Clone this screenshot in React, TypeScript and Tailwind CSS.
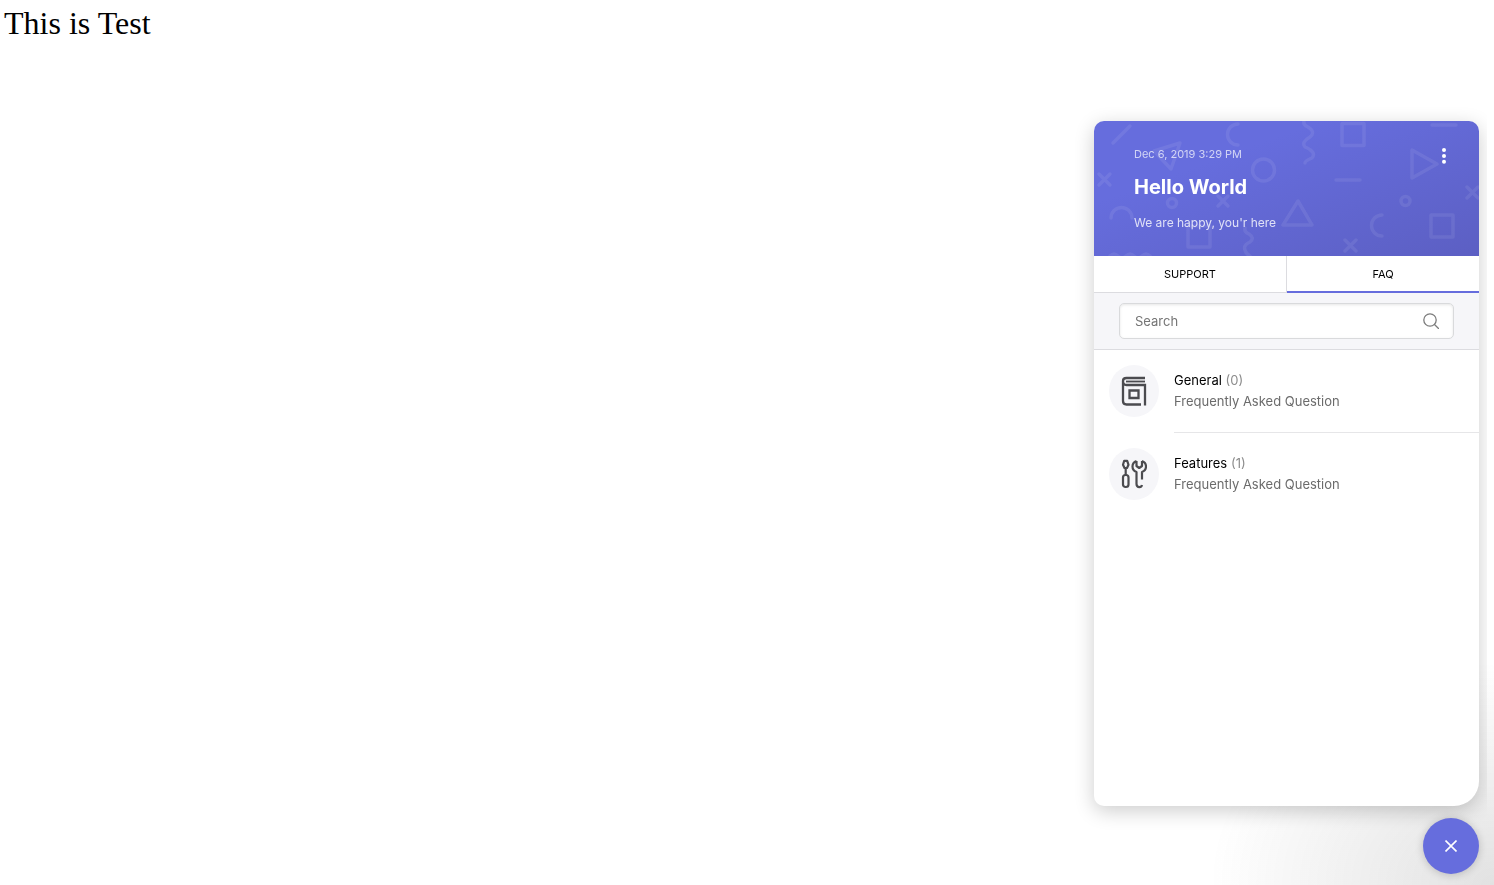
import { ReactNode, useState } from "react";

const tabs = ["SUPPORT", "FAQ"];

const topics = [
  { title: "General", count: 0, icon: <BookIcon /> },
  { title: "Features", count: 1, icon: <ToolsIcon /> },
];

function BookIcon() {
  return (
    <svg
      className="h-[30px] w-[26px]"
      viewBox="0 0 26 30"
      fill="none"
      stroke="#4b4b4f"
      strokeWidth="2.300"
    >
      <path d="M24 2H5.500Q2 2 2 5v20q0 3.500 3.500 3.500H20M2 5q0 4 3.500 4H24v20.500" />
      <path d="M5 5.500h19" strokeWidth="1.800" />
      <path d="M8.500 14.500h9v7.500h-9z" />
    </svg>
  );
}

function ToolsIcon() {
  return (
    <svg
      className="h-[30px] w-[26px]"
      viewBox="0 0 26 30"
      fill="none"
      stroke="#4b4b4f"
      strokeWidth="2.200"
      strokeLinejoin="round"
    >
      <path d="M3.200 1.800h3l1.300 4L6 9H3.500L2 5.800zM4.700 9v7" />
      <rect x="2" y="16" width="5.500" height="12" rx="2.500" />
      <path d="M15.500 2q-4 1.500-4 5.500t4 5.500v12q0 3 3 3.200 2 0 2.500-2.200M21 2q4 1.500 4 5.500t-4 5.500v7.500M15.500 2v5l2.700 2L21 7V2" />
    </svg>
  );
}

function Pattern() {
  return (
    <svg
      className="absolute top-0 right-0 h-[135px] w-[385px]"
      viewBox="0 0 385 135"
      fill="none"
      stroke="#fff"
      strokeOpacity="0.08"
      strokeWidth="3.500"
      strokeLinecap="round"
      strokeLinejoin="round"
    >
      <path d="M19 22 36 5M60 30l26-8-9 26zM5 53l11 11M16 53 5 64M17 97a10.500 10.500 0 0 1 21 0" />
      <circle cx="78" cy="82" r="4.500" />
      <circle cx="169.500" cy="49" r="11" />
      <path d="M144 3a10.500 10.500 0 0 0 0 21M124 75l10 10M134 75l-10 10M94 105h22v21H94z" />
      <path d="M151 107q-1 4 4 6 6 4 1 8-7 3-5 8 1 4 5 6M16 135q4-4 8 0t8 0q4-4 8 0t8 0q4-4 8 0" />
      <path d="M210 0q-1 4 4 6 8 5 2 10-9 5-5 10 12 5 7 11-7 3-7 5" />
      <path d="M248 2.500h22v22h-22zM338 4h24M242 59h24M318 29v28l25-14zM204 80l-15 24h29z" />
      <path d="M373 66l11 11M384 66l-11 11M251 119l11 11M262 119l-11 11M288 94a10.500 10.500 0 0 0 0 21M337 94h22v22h-22z" />
      <circle cx="311.500" cy="80" r="4.500" />
    </svg>
  );
}

function Header() {
  return (
    <header className="relative overflow-hidden bg-linear-[160deg,#666ddd_30%,#5c5fc3] px-10 pt-6 pb-6 text-white">
      <Pattern />
      <div className="relative">
        <p className="text-[11px] leading-[18px] text-white/70">
          Dec 6, 2019 3:29 PM
        </p>
        <h2 className="mt-2 text-[20px] leading-8 font-bold">Hello World</h2>
        <p className="mt-[10px] text-[12px] leading-[19px] text-white/80">
          We are happy, you'r here
        </p>
      </div>
      <button
        aria-label="Menu"
        className="absolute top-6 right-6 flex h-[22px] w-[22px] items-center justify-center"
      >
        <svg className="h-4 w-1" viewBox="0 0 4 16" fill="#fff">
          <circle cx="2" cy="2" r="2" />
          <circle cx="2" cy="8" r="2" />
          <circle cx="2" cy="13.800" r="2" />
        </svg>
      </button>
    </header>
  );
}

function SearchBar() {
  return (
    <div className="border-b border-[#dcdce0] bg-[#f6f6f9] px-[25px] py-[10px]">
      <label className="flex h-9 items-center rounded-[5px] border border-[#d9dadc] bg-white pr-[14px] pl-[15px] shadow-[inset_0_1px_3px_rgba(0,0,0,0.1)]">
        <input
          aria-label="Search"
          placeholder="Search"
          className="min-w-0 flex-1 pt-px text-[13px] outline-none placeholder:text-[#757575]"
        />
        <svg
          className="h-4 w-4"
          viewBox="0 0 16 16"
          fill="none"
          stroke="#7c7c7c"
          strokeWidth="1.300"
          strokeLinecap="round"
        >
          <circle cx="7" cy="7" r="6.200" />
          <path d="m11.500 11.500 4 4" />
        </svg>
      </label>
    </div>
  );
}

function Topic({
  title,
  count,
  icon,
}: {
  title: string;
  count: number;
  icon: ReactNode;
}) {
  return (
    <li className="group flex pl-[15px]">
      <div className="my-[15px] mr-[15px] flex h-[52px] w-[50px] items-center justify-center rounded-[50%] bg-[#f6f6f9]">
        {icon}
      </div>
      <a
        href="#"
        className="flex-1 border-b border-[#e6e6e8] py-[20px] text-[13px] leading-[21px] text-[#6b6b6b] group-last:border-0"
      >
        <p className="text-[#8c8c8c]">
          <span className="text-black">{title}</span> ({count})
        </p>
        <p>Frequently Asked Question</p>
      </a>
    </li>
  );
}

function App() {
  const [active, setActive] = useState("FAQ");
  const [open, setOpen] = useState(true);

  return (
    <main className="relative min-h-screen overflow-hidden bg-white">
      <h1 className="px-1 py-[3px] font-['Liberation_Serif',serif] text-[32px] leading-10 text-black">
        This is Test
      </h1>
      <div className="fixed right-0 bottom-0 h-[220px] w-[280px] bg-[radial-gradient(ellipse_at_bottom_right,rgba(29,29,29,0.13)_0%,rgba(29,29,29,0)_72%)]" />
      {open && (
        <div className="fixed right-[7px] bottom-0 overflow-hidden pt-10 pr-2 pb-[79px] pl-10 font-[Inter,sans-serif]">
          <section className="h-[685px] max-h-[calc(100vh-119px)] w-[385px] overflow-hidden rounded-[10px] rounded-br-[25px] bg-white shadow-[0_5px_20px_rgba(0,0,0,0.2)]">
            <Header />
            <nav className="flex h-[37px] divide-x divide-[#dcdce0]">
              {tabs.map((tab) => (
                <button
                  key={tab}
                  onClick={() => setActive(tab)}
                  className={
                    active === tab
                      ? "flex-1 border-b-2 border-b-[#666ddd] pt-px text-[11px] text-black"
                      : "flex-1 border-b border-b-[#dcdce0] text-[11px] text-black"
                  }
                >
                  {tab}
                </button>
              ))}
            </nav>
            <SearchBar />
            <ul>
              {topics.map((topic) => (
                <Topic key={topic.title} {...topic} />
              ))}
            </ul>
          </section>
        </div>
      )}
      <button
        aria-label="Close"
        onClick={() => setOpen(!open)}
        className="fixed right-[15px] bottom-[11px] flex h-14 w-14 items-center justify-center rounded-full bg-[#666ddd] shadow-[0_1px_8px_rgba(0,0,0,0.2)]"
      >
        <svg
          className="h-3 w-3"
          viewBox="0 0 12 12"
          stroke="#fff"
          strokeWidth="1.600"
        >
          <path d="m0.500 0.500 11 11M11.500 0.500l-11 11" />
        </svg>
      </button>
    </main>
  );
}

export default App;
